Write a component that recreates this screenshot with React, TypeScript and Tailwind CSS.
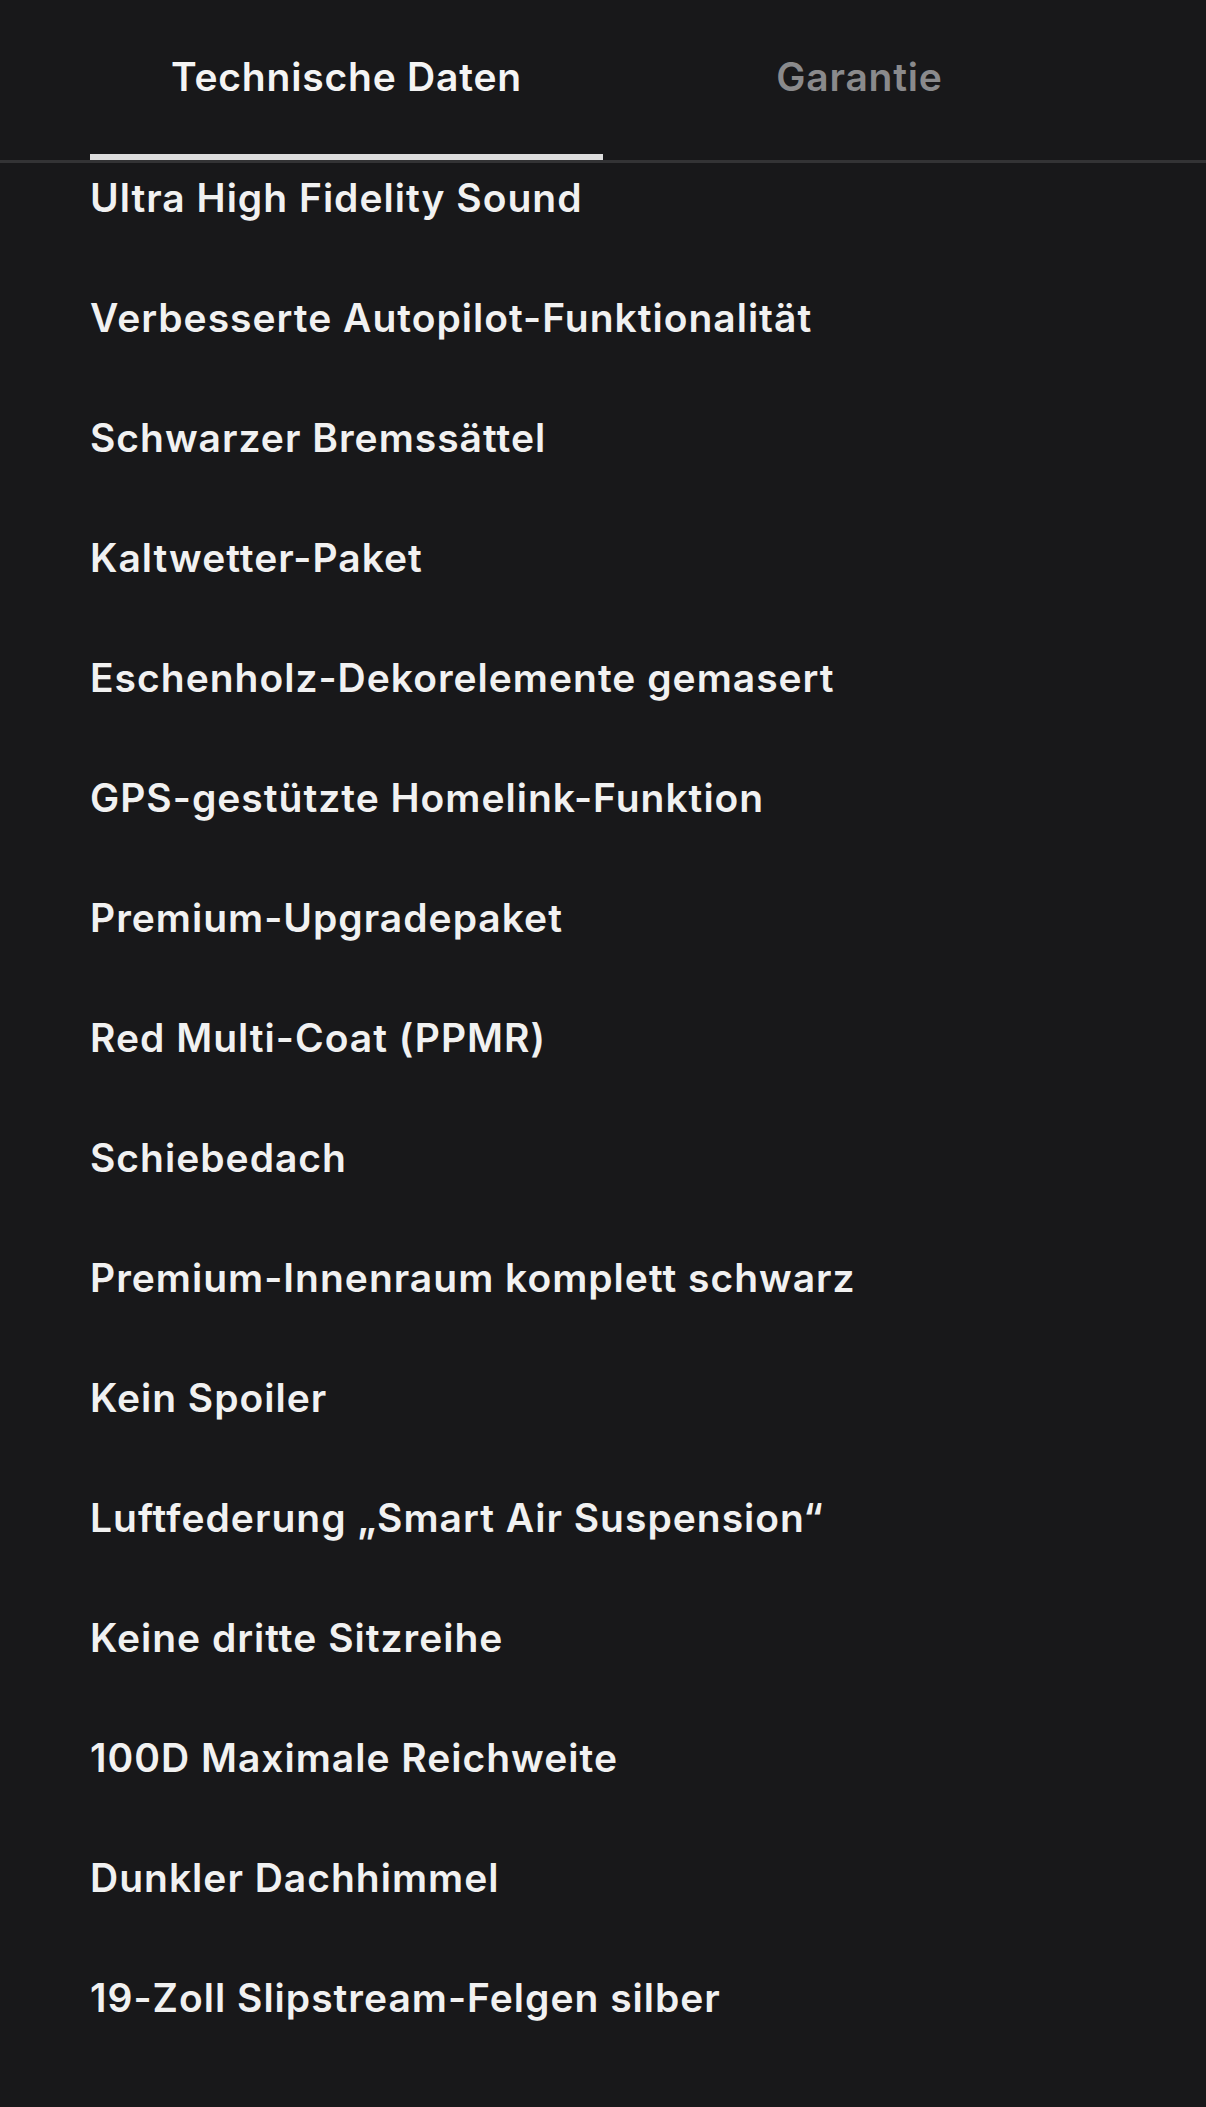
import React from "react";

const features = [
  "Ultra High Fidelity Sound",
  "Verbesserte Autopilot-Funktionalität",
  "Schwarzer Bremssättel",
  "Kaltwetter-Paket",
  "Eschenholz-Dekorelemente gemasert",
  "GPS-gestützte Homelink-Funktion",
  "Premium-Upgradepaket",
  "Red Multi-Coat (PPMR)",
  "Schiebedach",
  "Premium-Innenraum komplett schwarz",
  "Kein Spoiler",
  "Luftfederung „Smart Air Suspension“",
  "Keine dritte Sitzreihe",
  "100D Maximale Reichweite",
  "Dunkler Dachhimmel",
  "19-Zoll Slipstream-Felgen silber",
];

export default function App() {
  return (
    <div
      className="min-h-screen w-full bg-[#18181a] text-[#f1f1f1]"
      style={{ fontFamily: "Inter, 'Open Sans', sans-serif" }}
    >
      {/* Tab bar */}
      <div className="border-b-[3px] border-[#333335]">
        <div className="flex px-[90px]">
          <button className="relative flex h-[160px] flex-1 items-start justify-center pt-[55px] text-[39px] font-semibold leading-[44px] tracking-[0.8px] text-[#f4f4f4]">
            Technische Daten
            <span className="absolute bottom-0 left-0 right-0 h-[6px] bg-[#dddddd]" />
          </button>
          <button className="flex h-[160px] flex-1 items-start justify-center pt-[55px] text-[39px] font-semibold leading-[44px] tracking-[0.8px] text-[#8a8a8c]">
            Garantie
          </button>
        </div>
      </div>

      {/* Feature list */}
      <ul className="flex flex-col gap-[80px] px-[90px] pt-[15px] pb-[88px]">
        {features.map((f) => (
          <li key={f} className="text-[39px] font-semibold leading-[40px] tracking-[1px]">
            {f}
          </li>
        ))}
      </ul>
    </div>
  );
}
